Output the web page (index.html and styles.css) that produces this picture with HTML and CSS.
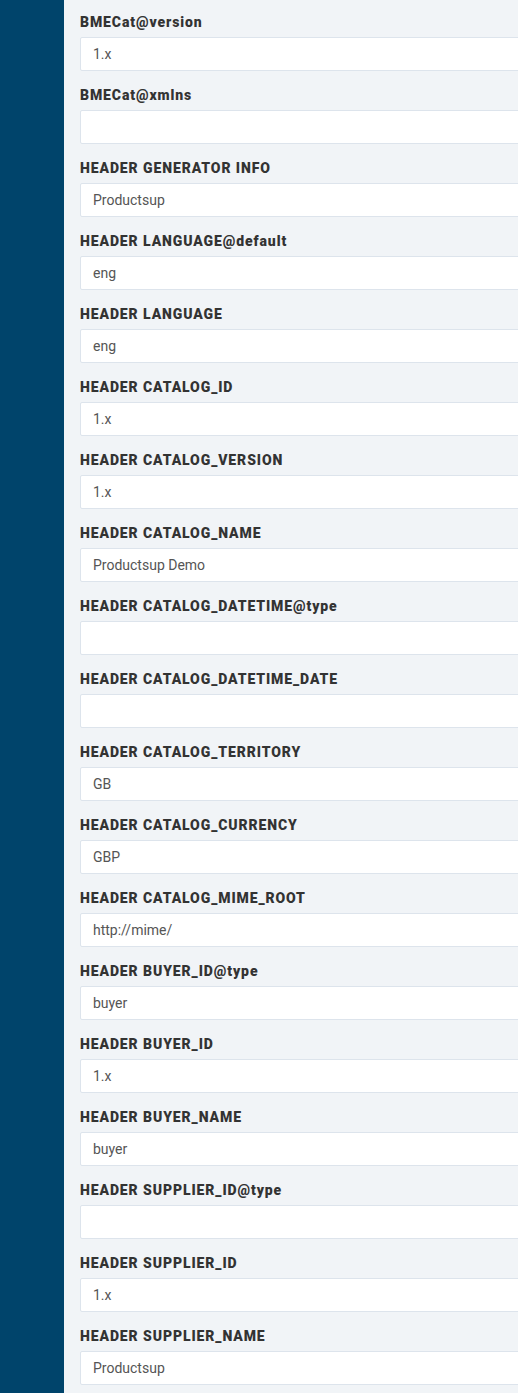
FILE: index.html
```html
<!DOCTYPE html>
<html>
<head>
<meta charset="utf-8">
<link rel="stylesheet" href="styles.css">
</head>
<body>
<div class="layout">
  <aside class="sidebar"></aside>
  <main class="main">
    <div class="field"><label class="label">BMECat@version</label><div class="input">1.x</div></div>
    <div class="field"><label class="label">BMECat@xmlns</label><div class="input"></div></div>
    <div class="field"><label class="label">HEADER GENERATOR INFO</label><div class="input">Productsup</div></div>
    <div class="field"><label class="label">HEADER LANGUAGE@default</label><div class="input">eng</div></div>
    <div class="field"><label class="label">HEADER LANGUAGE</label><div class="input">eng</div></div>
    <div class="field"><label class="label">HEADER CATALOG_ID</label><div class="input">1.x</div></div>
    <div class="field"><label class="label">HEADER CATALOG_VERSION</label><div class="input">1.x</div></div>
    <div class="field"><label class="label">HEADER CATALOG_NAME</label><div class="input">Productsup Demo</div></div>
    <div class="field"><label class="label">HEADER CATALOG_DATETIME@type</label><div class="input"></div></div>
    <div class="field"><label class="label">HEADER CATALOG_DATETIME_DATE</label><div class="input"></div></div>
    <div class="field"><label class="label">HEADER CATALOG_TERRITORY</label><div class="input">GB</div></div>
    <div class="field"><label class="label">HEADER CATALOG_CURRENCY</label><div class="input">GBP</div></div>
    <div class="field"><label class="label">HEADER CATALOG_MIME_ROOT</label><div class="input">http://mime/</div></div>
    <div class="field"><label class="label">HEADER BUYER_ID@type</label><div class="input">buyer</div></div>
    <div class="field"><label class="label">HEADER BUYER_ID</label><div class="input">1.x</div></div>
    <div class="field"><label class="label">HEADER BUYER_NAME</label><div class="input">buyer</div></div>
    <div class="field"><label class="label">HEADER SUPPLIER_ID@type</label><div class="input"></div></div>
    <div class="field"><label class="label">HEADER SUPPLIER_ID</label><div class="input">1.x</div></div>
    <div class="field"><label class="label">HEADER SUPPLIER_NAME</label><div class="input">Productsup</div></div>
  </main>
</div>
</body>
</html>
```
FILE: styles.css
```css
html, body {
  margin: 0;
  padding: 0;
  height: 100%;
  overflow: hidden;
}
body {
  font-family: Roboto, "Liberation Sans", sans-serif;
  background: #f1f4f7;
}
.layout {
  display: flex;
  min-height: 1393px;
}
.sidebar {
  flex: 0 0 64px;
  background: #00446b;
}
.main {
  flex: 1 1 auto;
  padding: 12px 0 0 16px;
  overflow: hidden;
}
.field {
  display: flex;
  flex-direction: column;
  margin-bottom: 14px;
}
.label {
  display: block;
  font-size: 14px;
  font-weight: 900;
  line-height: 20px;
  color: #333333;
  margin-bottom: 5px;
  letter-spacing: 0.9px;
}
.input {
  box-sizing: border-box;
  width: 600px;
  height: 34px;
  background: #ffffff;
  border: 1px solid #dde4ec;
  border-radius: 2px;
  padding: 0 12px;
  font-size: 14px;
  line-height: 32px;
  color: #555555;
}
```
